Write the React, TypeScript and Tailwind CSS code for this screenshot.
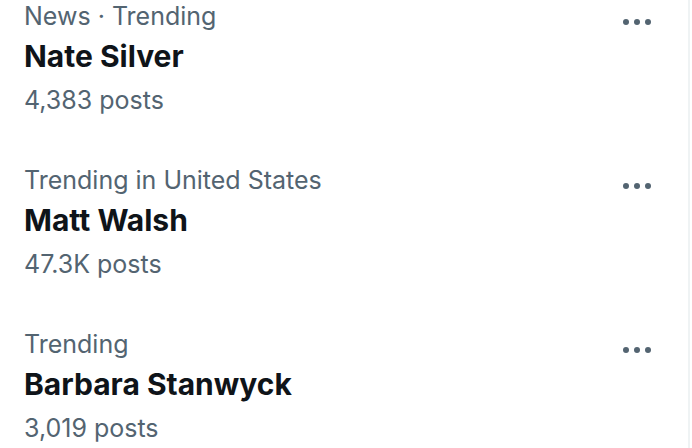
const trends = [
  { category: 'News · Trending', name: 'Nate Silver', posts: '4,383 posts' },
  { category: 'Trending in United States', name: 'Matt Walsh', posts: '47.3K posts' },
  { category: 'Trending', name: 'Barbara Stanwyck', posts: '3,019 posts' },
];

function MoreIcon() {
  return (
    <svg width="34" height="10" viewBox="0 0 34 10" className="fill-[#536471]">
      <circle cx="6" cy="5" r="3" />
      <circle cx="17" cy="5" r="3" />
      <circle cx="28" cy="5" r="3" />
    </svg>
  );
}

export default function App() {
  return (
    <div className="h-[448px] w-[692px] overflow-hidden bg-white font-['Inter',sans-serif]">
      <div className="-mt-6 w-[690px] border-r-2 border-[#eff3f4]">
        {trends.map((t) => (
          <div key={t.name} className="flex items-start justify-between py-[26px] pl-6 pr-[34px]">
            <div className="flex flex-col">
              <span className="text-[25px] leading-7 text-[#536471]">{t.category}</span>
              <span className="mt-[6px] text-[30px] font-bold leading-10 text-[#0f1419]">{t.name}</span>
              <span className="mt-[10px] text-[25px] leading-7 text-[#536471]">{t.posts}</span>
            </div>
            <div className="mt-[15px]">
              <MoreIcon />
            </div>
          </div>
        ))}
      </div>
    </div>
  );
}
